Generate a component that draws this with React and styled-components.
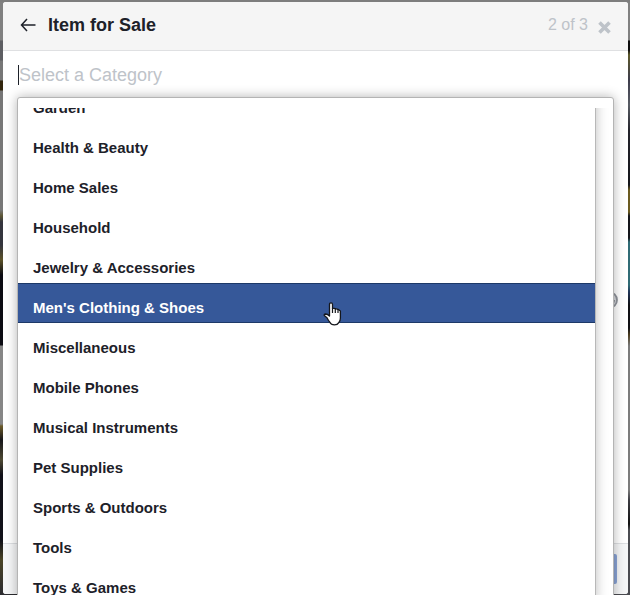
import React from "react";
import styled, { createGlobalStyle } from "styled-components";

const categories = [
    "Garden",
    "Health & Beauty",
    "Home Sales",
    "Household",
    "Jewelry & Accessories",
    "Men's Clothing & Shoes",
    "Miscellaneous",
    "Mobile Phones",
    "Musical Instruments",
    "Pet Supplies",
    "Sports & Outdoors",
    "Tools",
    "Toys & Games",
];

const GlobalStyle = createGlobalStyle`
    * {
        box-sizing: border-box;
    }
    body {
        margin: 0;
        font-family: "Liberation Sans", Arial, sans-serif;
        color: #1d2129;
    }
    button,
    input {
        font: inherit;
        color: inherit;
        border: 0;
        padding: 0;
        background: none;
    }
`;

// dimmed page behind the dialog
const Backdrop = styled.div`
    display: flex;
    height: 100vh;
    padding: 2px 2px 1px 3px;
    overflow: hidden;
    background:
        linear-gradient(#7d7d7d, #7d7d7d) top / 100% 2px no-repeat,
        linear-gradient(#808080 40px, #5d5e62 41px 60px, #777 61px 80px, #33260e 81px 90px, #777 91px 210px,
            #5c5534 216px, #33343c 222px 245px, #5b5128 260px, #0b0b12 275px 345px, #858585 346px 424px,
            #6c5b2a 426px, #17161a 440px, #4d4832 460px, #101018 475px 540px, #4a4426 560px, #2b2b30 595px)
            left / 50% 100% no-repeat,
        linear-gradient(#808080 40px, #0c0c0c 41px 50px, #5e5a2c 55px, #3d3c4c 80px, #585c64 105px, #24242c 130px,
            #14151a 185px, #6a5a20 190px 212px, #14151a 216px 238px, #2f6a74 242px 285px, #203458 292px,
            #101014 305px 328px, #4c3d20 335px, #7b7b7b 346px 490px, #3c3c42 500px, #111 524px, #4a4b50 530px 595px)
            right / 50% 100% no-repeat;
`;

const Dialog = styled.section`
    display: flex;
    flex-direction: column;
    flex: 1;
    background: #fff;
    border-radius: 3px;
`;

const Header = styled.header`
    display: flex;
    align-items: center;
    height: 49px;
    padding: 0 17px 2px;
    background: #f5f5f5;
    border-bottom: 1px solid #dfe0e2;
    border-radius: 3px 3px 0 0;
`;

const IconButton = styled.button`
    display: flex;
    cursor: pointer;
`;

const CloseButton = styled(IconButton)`
    padding-top: 4px;
`;

const Title = styled.h1`
    flex: 1;
    margin: 0 0 0 12px;
    font-size: 18px;
    line-height: 22px;
`;

const Step = styled.span`
    margin-right: 10px;
    font-size: 16px;
    line-height: 20px;
    color: #bec3c9;
`;

const Body = styled.div`
    position: relative;
    display: flex;
    flex-direction: column;
    flex: 1;
    padding: 14px 10px 0 15px;
`;

const CategoryInput = styled.input`
    height: 20px;
    border-left: 1px solid #1d2129;
    outline: none;
    font-size: 18px;

    &::placeholder {
        color: #bec3c9;
        opacity: 1;
    }
`;

const Composer = styled.div`
    display: flex;
    align-items: center;
    justify-content: flex-end;
    margin-top: 206px;
    color: #90949c;
`;

const Footer = styled.footer`
    display: flex;
    align-items: center;
    justify-content: flex-end;
    height: 51px;
    padding: 0 11px;
    background: #f5f6f7;
    border-top: 1px solid #dddfe2;
    border-radius: 0 0 3px 3px;
`;

const NextButton = styled.button`
    width: 60px;
    height: 30px;
    background: #8aa4d6;
    border-radius: 2px;
`;

const Dropdown = styled.div`
    position: absolute;
    z-index: 1;
    top: 46px;
    left: 14px;
    right: 14px;
    padding-top: 10px;
    background: #fff;
    border: 1px solid #b4b4b4;
    border-radius: 3px;
    box-shadow: 0 0 12px rgba(0, 0, 0, 0.3);
`;

const Viewport = styled.div`
    overflow: hidden;
    padding-right: 18px;
`;

// scrolled part way into the first row
const List = styled.ul`
    margin: -25px 0 0;
    padding: 0;
    list-style: none;
    box-shadow: 1px 0 0 #b8b8b8, 0 0 12px rgba(0, 0, 0, 0.3);
`;

const Option = styled.button`
    display: block;
    width: 100%;
    height: 40px;
    padding: 10px 15px 0;
    border: solid ${({ $active }) => ($active ? "#1d3968" : "transparent")};
    border-width: 1px 0;
    background: ${({ $active }) => ($active ? "#365899" : "#fff")};
    color: ${({ $active }) => ($active ? "#fff" : "#1d2129")};
    font-size: 15px;
    font-weight: bold;
    line-height: 18px;
    text-align: left;
    cursor: pointer;
`;

const Pointer = styled.svg`
    position: absolute;
    z-index: 2;
    top: 251px;
    left: 320px;
    pointer-events: none;
`;

const BackIcon = () => (
    <svg width="16" height="14" viewBox="0 0 16 14" fill="none" stroke="#1d2129" strokeWidth="1.5">
        <path d="M7 1L1.5 7L7 13M1.5 7H15.5" />
    </svg>
);

const CloseIcon = () => (
    <svg width="13" height="13" viewBox="0 0 13 13" stroke="#bec3c9" strokeWidth="3.6">
        <path d="M1.5 1.5L11.5 11.5M11.5 1.5L1.5 11.5" />
    </svg>
);

const SmileIcon = () => (
    <svg width="18" height="18" viewBox="0 0 18 18" fill="none" stroke="currentColor" strokeWidth="1.8">
        <circle cx="9" cy="9" r="8" fill="#d8dade" />
        <path d="M4 10H14Q13 14.5 9 14.5T4 10Z" />
        <circle cx="6" cy="6.5" r="0.6" />
        <circle cx="12" cy="6.5" r="0.6" />
    </svg>
);

const HandPointer = () => (
    <Pointer width="19" height="24" viewBox="0 0 19 24" aria-hidden="true">
        <path
            d="M6.5 14V2.5Q6.5 .8 8 .8T9.5 2.5V6.2L12.3 6.6L15 7.3L17.4 9V16Q17.4 19 15.8 20.6Q14.5 22.8 11.5 22.8Q8 22.8 6.8 20.2Q5 18 4 15.8L1.3 13.6Q.8 12.2 2.6 12Q4.5 12 6.5 14Z"
            fill="#fff"
            stroke="#15171c"
            strokeWidth="1.3"
            strokeLinejoin="round"
        />
        <path d="M9.5 6V11M12.3 6.5V11M15 7.3V11" stroke="#15171c" strokeWidth="1.2" />
    </Pointer>
);

const App = () => {
    return (
        <Backdrop>
            <GlobalStyle />
            <Dialog role="dialog" aria-labelledby="dialog-title">
                <Header>
                    <IconButton type="button" aria-label="Back">
                        <BackIcon />
                    </IconButton>
                    <Title id="dialog-title">Item for Sale</Title>
                    <Step>2 of 3</Step>
                    <CloseButton type="button" aria-label="Close">
                        <CloseIcon />
                    </CloseButton>
                </Header>
                <Body>
                    <CategoryInput type="text" placeholder="Select a Category" aria-label="Category" />
                    <Composer>
                        <IconButton type="button" aria-label="Emoji">
                            <SmileIcon />
                        </IconButton>
                    </Composer>
                    <Dropdown>
                        <Viewport>
                            <List>
                                {categories.map((name) => (
                                    <li key={name}>
                                        <Option type="button" $active={name === "Men's Clothing & Shoes"}>
                                            {name}
                                        </Option>
                                    </li>
                                ))}
                            </List>
                        </Viewport>
                    </Dropdown>
                    <HandPointer />
                </Body>
                <Footer>
                    <NextButton type="button" aria-label="Next" />
                </Footer>
            </Dialog>
        </Backdrop>
    );
};

export default App;
